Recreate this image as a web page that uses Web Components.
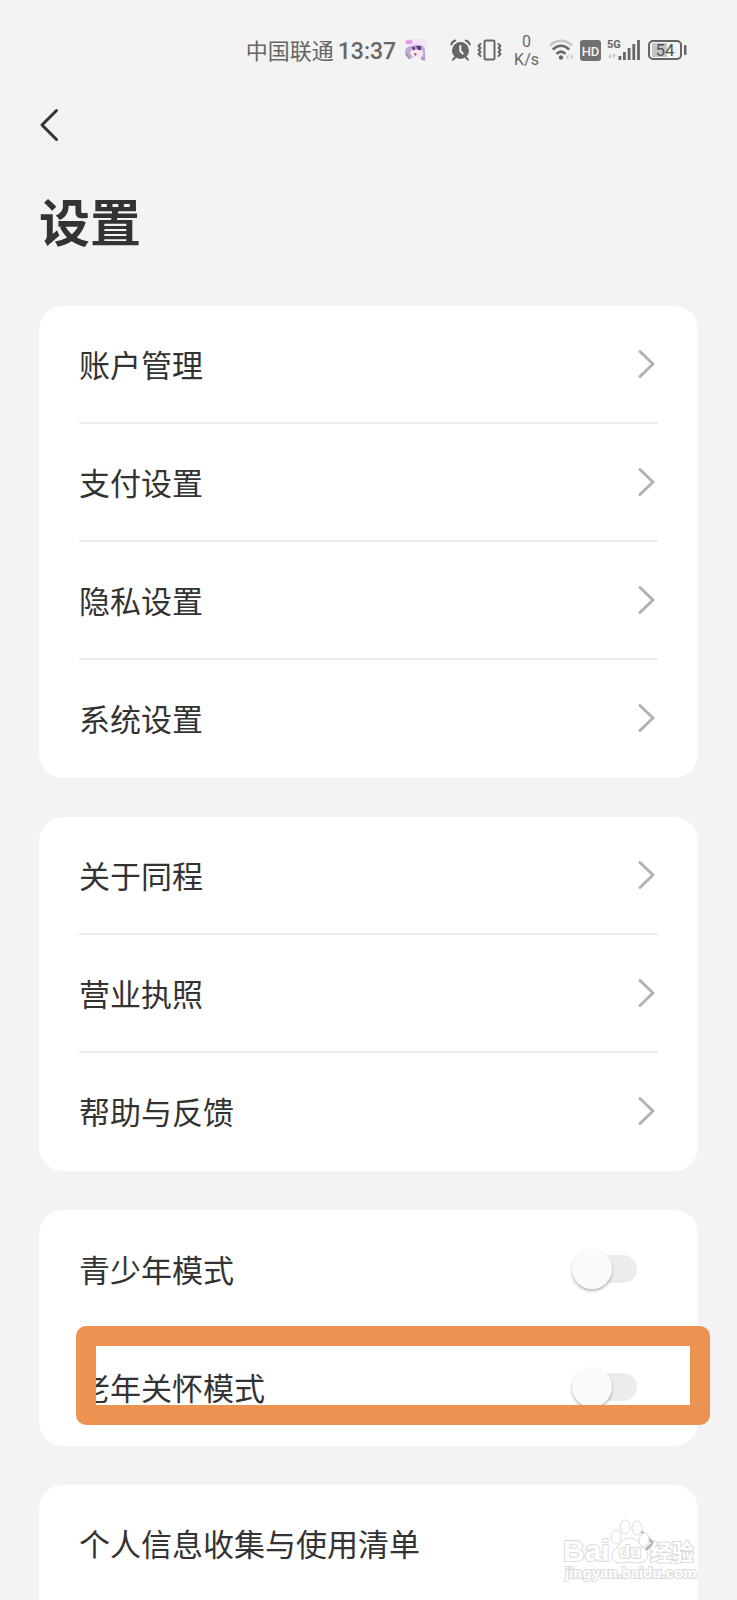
<!DOCTYPE html>
<html lang="zh-CN">
<head>
<meta charset="utf-8">
<meta name="viewport" content="width=device-width, initial-scale=1">
<title>设置</title>
<style>
  :root {
    --bg: #f3f3f3;
    --card: #fff;
    --text: #333;
    --status: #666;
    --line: #ececec;
    --gutter: 39px;
    --accent: #ec9351;
  }
  body {
    margin: 0;
    background: var(--bg);
    color: var(--text);
    font-family: "Noto Sans CJK SC", sans-serif;
  }
</style>
</head>
<body>
<settings-page>
  <status-bar slot="status" carrier="中国联通" time="13:37" speed="0" battery="54"></status-bar>
  <page-header slot="header">设置</page-header>

  <settings-card>
    <link-row>账户管理</link-row>
    <link-row>支付设置</link-row>
    <link-row>隐私设置</link-row>
    <link-row>系统设置</link-row>
  </settings-card>

  <settings-card>
    <link-row>关于同程</link-row>
    <link-row>营业执照</link-row>
    <link-row>帮助与反馈</link-row>
  </settings-card>

  <settings-card>
    <switch-row>青少年模式</switch-row>
    <switch-row marked>老年关怀模式</switch-row>
  </settings-card>

  <settings-card open-ended>
    <link-row>个人信息收集与使用清单<site-watermark slot="over"></site-watermark></link-row>
  </settings-card>
</settings-page>

<script>
/**
 * Base class: attaches an open shadow root and fills it from render()
 */
class BaseElement extends HTMLElement {
  constructor() {
    super();
    this.attachShadow({ mode: "open" });
  }

  connectedCallback() {
    this.shadowRoot.innerHTML = this.render();
  }
}

customElements.define(
  "settings-page",
  class extends BaseElement {
    render() {
      return `
        <style>
          :host {
            display: flex;
            flex-direction: column;
            height: 100vh;
          }
          main {
            display: flex;
            flex: 1;
            flex-direction: column;
            gap: var(--gutter);
            min-height: 0;
            overflow-y: auto;
            padding: 0 var(--gutter);
            scrollbar-width: none;
          }
        </style>
        <slot name="status"></slot>
        <slot name="header"></slot>
        <main><slot></slot></main>
      `;
    }
  },
);

customElements.define(
  "status-bar",
  class extends BaseElement {
    render() {
      return `
        <style>
          :host {
            align-items: center;
            box-sizing: border-box;
            color: var(--status);
            display: flex;
            flex: none;
            gap: 24px;
            height: 100px;
            justify-content: flex-end;
            padding-right: 50px;
          }
          .group {
            align-items: center;
            display: flex;
            gap: 6px;
          }
          .clock {
            align-items: baseline;
            display: flex;
            gap: 4px;
            margin-right: 2px;
          }
          .carrier {
            font-size: 22px;
            line-height: 32px;
          }
          .time {
            font: 500 23px/32px Roboto, sans-serif;
          }
          .speed {
            display: flex;
            flex-direction: column;
            font: 16px/18px Roboto, sans-serif;
            margin: 2px 4px 0 6px;
            text-align: center;
          }
          svg {
            display: block;
          }
          text {
            font-family: Roboto, sans-serif;
          }
        </style>
        <div class="group">
          <div class="clock">
            <span class="carrier">${this.getAttribute("carrier")}</span>
            <span class="time">${this.getAttribute("time")}</span>
          </div>
          ${this.avatar()}
        </div>
        <div class="group">
          <svg width="21" height="22" viewBox="0 0 21 22" fill="none" stroke="currentColor" stroke-width="2" stroke-linecap="round">
            <circle cx="10.500" cy="11.500" r="8.500" fill="currentColor" stroke="none"/>
            <path d="M1.300 5.500Q2 2.500 5.300 1.500M19.700 5.500Q19 2.500 15.700 1.500M5 18.500L3 20.700M16 18.500L18 20.700"/>
            <path d="M10.300 7V12L12.800 14.500" stroke="#f3f3f3"/>
          </svg>
          <svg width="25" height="22" viewBox="0 0 25 22" fill="none" stroke="currentColor" stroke-width="2" stroke-linejoin="round" stroke-linecap="round">
            <rect x="7.500" y="1.500" width="10" height="19" rx="1.500"/>
            <path d="M3.500 5L1.500 7L3.500 9L1.500 11L3.500 13L1.500 15L3.500 17M21.500 5L23.500 7L21.500 9L23.500 11L21.500 13L23.500 15L21.500 17"/>
          </svg>
          <span class="speed"><span>${this.getAttribute("speed")}</span><span>K/s</span></span>
          <svg width="25" height="22" viewBox="0 0 25 22" fill="none" stroke="currentColor" stroke-width="2.500">
            <path d="M1 6.500Q12 -3 23 6.500" stroke="#c6c6c6"/>
            <path d="M3.800 10.500Q12 3 20.200 10.500M7.500 14.800Q12 10.500 16.500 14.800"/>
            <circle cx="12" cy="18.500" r="2.200" fill="currentColor" stroke="none"/>
            <path d="M19.500 21V15L17 18.500ZM22 15V21L24.500 17.500Z" fill="#c6c6c6" stroke="none"/>
          </svg>
          <svg width="21" height="21" viewBox="0 0 21 21">
            <rect width="21" height="21" rx="3" fill="#707070"/>
            <text x="10.500" y="15.500" font-size="13" font-weight="500" fill="#f3f3f3" text-anchor="middle">HD</text>
          </svg>
          <svg width="34" height="22" viewBox="0 0 34 22" fill="currentColor">
            <text x="0" y="9" font-size="11" font-weight="700" font-stretch="normal">5G</text>
            <path d="M4 20V14L1 18ZM6 14V20L9 16Z" fill="#c6c6c6"/>
            <path d="M11.500 17h2.800v4h-2.800zM16 13h2.800v8h-2.800zM20.700 9h2.800v12h-2.800zM25.400 5h2.800v16h-2.800zM30.100 1h2.800v20h-2.800z"/>
          </svg>
          <svg width="40" height="22" viewBox="0 0 40 22">
            <rect x="5" y="4" width="15" height="14" fill="#c6c6c6"/>
            <rect x="2" y="2" width="32" height="18" rx="4" fill="none" stroke="currentColor" stroke-width="2"/>
            <rect x="37" y="6" width="2.500" height="10" rx="1" fill="currentColor"/>
            <text x="18" y="17" font-size="17" fill="#555" text-anchor="middle">${this.getAttribute("battery")}</text>
          </svg>
        </div>
      `;
    }

    /**
     * small chat sticker shown after the clock
     *
     * @returns {string}
     */
    avatar() {
      return `
        <svg width="22" height="22" viewBox="0 0 22 22">
          <path d="M8 0H22V8H8Z" fill="#f5e3f8"/>
          <ellipse cx="5" cy="3" rx="3.500" ry="2.500" fill="#e79be6"/>
          <path d="M1 13Q1 8 7 7Q15 4 20 8Q22 13 21 21L15 17L6 19Q1 18 1 13Z" fill="#c0a8d6"/>
          <path d="M6 12Q13 9 19 12Q20 19 13 19Q6 18 6 12Z" fill="#fbe7ef"/>
          <path d="M8 8H11V11H9ZM12 7H17V11H14Z" fill="#563b7d"/>
          <path d="M10 14L13 15L11 17Z" fill="#7b3e67"/>
          <path d="M2 15L6 20M17 19L21 21" stroke="#b08ac0" stroke-width="2"/>
        </svg>
      `;
    }
  },
);

customElements.define(
  "page-header",
  class extends BaseElement {
    render() {
      return `
        <style>
          :host {
            display: flex;
            flex: none;
            flex-direction: column;
            gap: 32px;
            padding: 0 var(--gutter) 48px;
          }
          button {
            align-items: center;
            background: none;
            border: 0;
            color: inherit;
            display: flex;
            height: 50px;
            padding: 0;
            width: 50px;
          }
          h1 {
            font-size: 51px;
            font-weight: 700;
            line-height: 76px;
            margin: 0;
          }
        </style>
        <button type="button" aria-label="返回">
          <svg width="22" height="34" viewBox="0 0 22 34" fill="none" stroke="currentColor" stroke-width="3" stroke-linecap="round" stroke-linejoin="round">
            <path d="M17.500 2.500L3 17L17.500 31.500"/>
          </svg>
        </button>
        <h1><slot></slot></h1>
      `;
    }
  },
);

customElements.define(
  "settings-card",
  class extends BaseElement {
    render() {
      return `
        <style>
          :host {
            background: var(--card);
            border-radius: 24px;
            display: flex;
            flex: none;
            flex-direction: column;
          }
          :host([open-ended]) {
            border-radius: 24px 24px 0 0;
            padding-bottom: 40px;
          }
          ::slotted(link-row:not(:last-child)) {
            --divider: var(--line);
          }
        </style>
        <slot></slot>
      `;
    }
  },
);

customElements.define(
  "link-row",
  class extends BaseElement {
    render() {
      return `
        <style>
          :host {
            display: block;
            padding: 0 40px;
            position: relative;
          }
          button {
            align-items: center;
            background: none;
            border: 0;
            border-bottom: 2px solid var(--divider, transparent);
            box-sizing: border-box;
            color: inherit;
            display: flex;
            font: inherit;
            font-size: 31px;
            height: 118px;
            justify-content: space-between;
            line-height: 46px;
            padding: 0 2px 0 0;
            text-align: left;
            width: 100%;
          }
        </style>
        <button type="button">
          <span><slot></slot></span>
          <svg width="18" height="30" viewBox="0 0 18 30" fill="none" stroke="#b2b2b2" stroke-width="3" stroke-linecap="round" stroke-linejoin="round">
            <path d="M2 2.500L15 15L2 27.500"/>
          </svg>
        </button>
        <slot name="over"></slot>
      `;
    }
  },
);

customElements.define(
  "switch-row",
  class extends BaseElement {
    render() {
      return `
        <style>
          :host {
            display: block;
            padding: 0 61px 0 40px;
            position: relative;
          }
          .row {
            align-items: center;
            display: flex;
            height: 118px;
            justify-content: space-between;
          }
          label {
            font-size: 31px;
            line-height: 46px;
          }
          input {
            align-items: center;
            appearance: none;
            display: flex;
            height: 40px;
            margin: 0;
            position: relative;
            width: 65px;
          }
          /* track */
          input::before {
            background: var(--line);
            border-radius: 14px;
            content: "";
            height: 28px;
            margin-left: 6px;
            width: 59px;
          }
          /* thumb, taller than the track it sits on */
          input::after {
            background: #fafafa;
            border-radius: 50%;
            box-shadow: 0 2px 3px rgba(0, 0, 0, 0.28);
            content: "";
            height: 40px;
            left: 0;
            position: absolute;
            top: 0;
            width: 40px;
          }
          input:checked::after {
            left: 25px;
          }
          .mark {
            border: 20px solid var(--accent);
            border-radius: 10px;
            inset: -2px -12px 21px 37px;
            pointer-events: none;
            position: absolute;
          }
        </style>
        <div class="row">
          <label for="toggle"><slot></slot></label>
          <input id="toggle" type="checkbox" role="switch">
        </div>
        ${this.hasAttribute("marked") ? '<div class="mark"></div>' : ""}
      `;
    }
  },
);

customElements.define(
  "site-watermark",
  class extends BaseElement {
    render() {
      return `
        <style>
          :host {
            bottom: 14px;
            pointer-events: none;
            position: absolute;
            right: 0;
          }
          svg {
            display: block;
          }
          text {
            font-family: "Liberation Sans", "Noto Sans CJK SC", sans-serif;
            font-weight: 700;
            paint-order: stroke;
          }
        </style>
        <svg width="136" height="76" viewBox="0 0 136 76" fill="#fff" stroke="#dadada" stroke-width="2">
          <g stroke-width="1">
            <ellipse cx="54" cy="24" rx="5" ry="7"/>
            <ellipse cx="63" cy="14" rx="5" ry="7"/>
            <ellipse cx="75" cy="15" rx="5" ry="7"/>
            <ellipse cx="82" cy="27" rx="5" ry="7" transform="rotate(10 82 27)"/>
            <path d="M67 25C76 25 77 32 83 36C89 42 85 50 77 50C72 50 70 49 67 49C64 49 62 50 58 50C50 50 47 42 53 36C59 32 59 25 67 25Z"/>
          </g>
          <text x="1" y="48" font-size="30">Bai</text>
          <text x="68" y="45" font-size="18" text-anchor="middle">du</text>
          <text x="88" y="47" font-size="22">经验</text>
          <text x="3" y="65" font-size="15">jingyan.baidu.com</text>
        </svg>
      `;
    }
  },
);
</script>
</body>
</html>
